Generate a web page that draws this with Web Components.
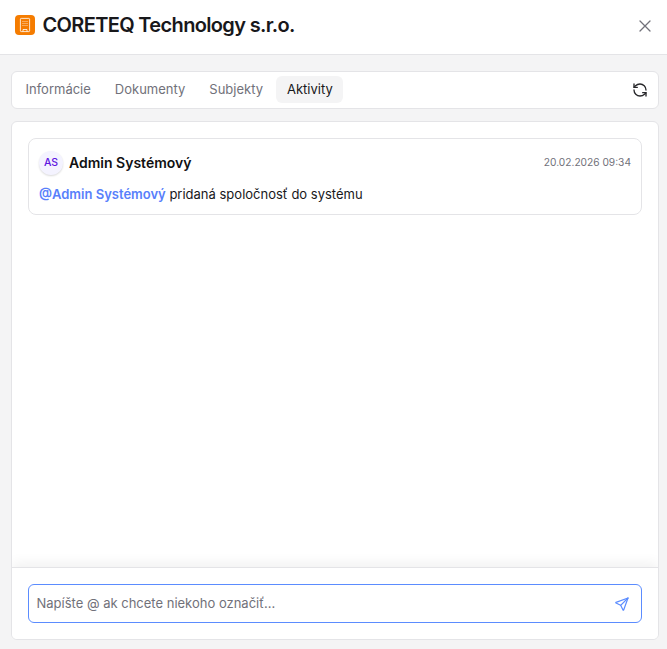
<!DOCTYPE html>
<html lang="sk"><head><meta charset="utf-8"><title>CORETEQ</title>
<style>
html,body{margin:0;padding:0;height:100%;overflow:hidden}
body{font-family:Inter,"Liberation Sans",sans-serif;background:#f4f4f5}
</style></head><body>
<company-dialog>
  <dialog-header slot="header" title-text="CORETEQ Technology s.r.o."></dialog-header>
  <tab-bar slot="tabs">
    <tab-item>Informácie</tab-item><tab-item>Dokumenty</tab-item><tab-item>Subjekty</tab-item><tab-item active>Aktivity</tab-item>
  </tab-bar>
  <activity-panel slot="panel">
    <activity-card name="Admin Systémový" initials="AS" date="20.02.2026 09:34"><b>@Admin Systémový</b> pridaná spoločnosť do systému</activity-card>
  </activity-panel>
</company-dialog>
<script>
function def(name,html,attrs){customElements.define(name,class extends HTMLElement{
  connectedCallback(){if(this.shadowRoot)return;const r=this.attachShadow({mode:'open'});
    r.innerHTML=html.replace(/\{\{(\w+(?:-\w+)?)\}\}/g,(m,k)=>this.getAttribute(k)||'');}
});}
def('company-dialog',`<style>:host{display:flex;flex-direction:column;height:649px}
.b{flex:1;min-height:0;display:flex;flex-direction:column;gap:12px;padding:16px 8px 9px 11px}</style>
<slot name="header"></slot><div class="b"><slot name="tabs"></slot><slot name="panel"></slot></div>`);
def('dialog-header',`<style>:host{display:flex;align-items:center;height:50px;box-sizing:content-box;background:#fff;border-bottom:1px solid #e4e4e7;padding:0 15px 4px;gap:7.5px}
.logo{width:20px;height:20px;border-radius:4px;background:#f57c00;display:flex;align-items:center;justify-content:center;flex:none}
h1{margin:0;font-size:20px;font-weight:600;letter-spacing:-.65px;color:#18181b;flex:1;line-height:28px}
svg{display:block}</style>
<span class="logo"><svg width="16" height="16" viewBox="0 0 16 16" fill="none" stroke="#fff" stroke-width=".8"><rect x="3.4" y="1.4" width="9.2" height="13.2" rx=".8"/><path d="M5.5 4.5h1M7.5 4.5h1M9.5 4.5h1M5.5 6.5h1M7.5 6.5h1M9.5 6.5h1M5.5 8.5h1M7.5 8.5h1M9.5 8.5h1" stroke-width=".7"/><path d="M6 14.5v-2h4v2"/></svg></span>
<h1>{{title-text}}</h1>
<svg width="16" height="16" viewBox="0 0 16 16" fill="none" stroke="#71717a" stroke-width="1.3" stroke-linecap="round" style="margin:2px -1px 0 0"><path d="M3 3l10 10M13 3L3 13"/></svg>`);
def('tab-bar',`<style>:host{display:flex;align-items:center;height:35px;background:#fff;border:1px solid #e4e4e7;border-radius:6px;padding:0 10px 1px 3px;flex:none}
.t{display:flex;gap:3px;flex:1}svg{display:block;margin-top:1px}</style>
<div class="t"><slot></slot></div>
<svg width="16" height="16" viewBox="0 0 24 24" fill="none" stroke="#27272a" stroke-width="2" stroke-linecap="round" stroke-linejoin="round"><path d="M21 12a9 9 0 0 0-9-9 9.75 9.75 0 0 0-6.74 2.74L3 8"/><path d="M3 3v5h5"/><path d="M3 12a9 9 0 0 0 9 9 9.75 9.75 0 0 0 6.74-2.74L21 16"/><path d="M16 16h5v5"/></svg>`);
customElements.define('tab-item',class extends HTMLElement{connectedCallback(){if(this.shadowRoot)return;
  this.attachShadow({mode:'open'}).innerHTML=`<style>:host{display:block;font-size:13px;line-height:19px;padding:4px 10.5px;color:#71717a;border-radius:6px}
  :host([active]){background:#f4f4f5;color:#18181b}</style><slot></slot>`;}});
def('activity-panel',`<style>:host{flex:1;min-height:0;display:flex;flex-direction:column;background:#fff;border:1px solid #e4e4e7;border-radius:6px;overflow:hidden}
.list{flex:1;padding:16px 16px;min-height:0;box-sizing:border-box}
.f{flex:none;border-top:1px solid #e4e4e7;padding:16px;box-shadow:0 -4px 12px rgba(0,0,0,.06);position:relative;background:#fff}
.inp{display:flex;align-items:center;height:37px;border:1px solid #5b8cff;border-radius:6px;padding:0 11px 0 7.5px}
.ph{flex:1;font-size:13px;color:#71717a;padding-bottom:1px}svg{display:block}</style>
<div class="list"><slot></slot></div>
<div class="f"><div class="inp"><span class="ph">Napíšte @ ak chcete niekoho označiť...</span>
<svg width="16" height="16" viewBox="0 0 24 24" fill="none" stroke="#5b8cff" stroke-width="1.8" stroke-linecap="round" stroke-linejoin="round"><path d="M10 14l11-11"/><path d="M21 3l-6.5 18a.55.55 0 0 1-1 0l-3.5-7-7-3.5a.55.55 0 0 1 0-1l18-6.5"/></svg></div></div>`);
def('activity-card',`<style>:host{display:block;border:1px solid #e4e4e7;border-radius:8px;padding:12px 10px 11px;height:52px;box-sizing:content-box}
.h{display:flex;align-items:center;gap:6px;height:24px}
.av{width:24px;height:24px;border-radius:50%;background:#f4f3ff;box-shadow:0 1px 2px rgba(0,0,0,.15);display:flex;align-items:center;justify-content:center;color:#5f14e0;font-size:10.5px;font-weight:500;padding-bottom:1px;box-sizing:border-box}
.n{flex:1;font-size:14px;font-weight:600;color:#111113;padding-bottom:1px}
.d{font-size:10.2px;color:#71717a;padding-bottom:2px}
.m{font-size:13px;line-height:20px;color:#18181b;margin-top:9px}
::slotted(b){color:#5880fb;font-weight:600}</style>
<div class="h"><span class="av">{{initials}}</span><span class="n">{{name}}</span><span class="d">{{date}}</span></div>
<div class="m"><slot></slot></div>`);
</script>
</body></html>
